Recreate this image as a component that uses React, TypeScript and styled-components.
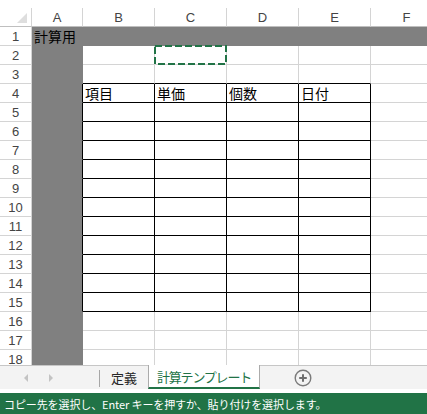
import React, { FC } from 'react'
import styled, { createGlobalStyle } from 'styled-components'

const GRID = '#d4d4d4'
const BAND = '#808080'
const INK = '#000000'
const EXCEL_GREEN = '#217346'

const GlobalStyle = createGlobalStyle`
  html, body {
    margin: 0;
    padding: 0;
    background: #ffffff;
  }
  body {
    width: 427px;
    height: 414px;
    overflow: hidden;
    font-family: "Noto Sans CJK JP", "Noto Sans", sans-serif;
  }
`

const Window = styled.div`
  display: flex;
  flex-direction: column;
  width: 427px;
  height: 414px;
  overflow: hidden;
`

const SheetArea = styled.div`
  height: 365px;
  overflow: hidden;
  padding-top: 8px;
  box-sizing: border-box;
`

const Sheet = styled.div`
  display: grid;
  grid-template-columns: 32px 51px repeat(5, 72px);
  grid-auto-rows: 19px;
`

type CellProps = {
  $fill?: string
  $right?: string
  $bottom?: string
}

const Cell = styled.div<CellProps>`
  box-sizing: border-box;
  background: ${({ $fill }) => $fill || '#ffffff'};
  border-right: 1px solid ${({ $right }) => $right || GRID};
  border-bottom: 1px solid ${({ $bottom }) => $bottom || GRID};
  display: flex;
  align-items: center;
  padding-left: 2px;
  font-size: 14px;
  color: #000;
  white-space: nowrap;
  position: relative;
`

const Overflowing = styled.span`
  position: relative;
  z-index: 2;
  line-height: 1;
`

const Header = styled.div<{ $bottom?: string }>`
  box-sizing: border-box;
  background: #ffffff;
  border-right: 1px solid ${GRID};
  border-bottom: 1px solid ${({ $bottom }) => $bottom || '#bfbfbf'};
  display: flex;
  align-items: center;
  justify-content: center;
  font-family: "Liberation Sans", "DejaVu Sans", sans-serif;
  font-size: 13px;
  color: #444444;
`

const Corner = styled(Header)`
  position: relative;
  border-bottom-color: #bfbfbf;

  &::after {
    content: '';
    position: absolute;
    right: 4px;
    bottom: 3px;
    width: 0;
    height: 0;
    border-left: 10px solid transparent;
    border-bottom: 10px solid #dedede;
  }
`

const Marquee = styled.svg`
  position: absolute;
  left: -1px;
  top: -1px;
  width: 73px;
  height: 20px;
  z-index: 3;
  overflow: visible;
`

const TabBar = styled.div`
  height: 28px;
  background: #ffffff;
  display: flex;
  flex-direction: column;
`

const TabStrip = styled.div`
  height: 24px;
  box-sizing: border-box;
  background: #f3f3f3;
  border-top: 1px solid #c6c6c6;
  display: flex;
  align-items: stretch;
`

const Nav = styled.div`
  width: 99px;
  display: flex;
  align-items: center;
  padding-left: 24px;
  gap: 21px;
  box-sizing: border-box;
`

const Arrow = styled.span<{ $dir: 'left' | 'right' }>`
  width: 0;
  height: 0;
  border-top: 4px solid transparent;
  border-bottom: 4px solid transparent;
  ${({ $dir }) =>
    $dir === 'left' ? 'border-right: 4px solid #c3c3c3;' : 'border-left: 4px solid #c3c3c3;'}
`

const Divider = styled.div`
  width: 1px;
  margin: 4px 0 2px;
  background: #a6a6a6;
`

const Tab = styled.div<{ $active?: boolean }>`
  box-sizing: border-box;
  width: ${({ $active }) => ($active ? '112px' : '48px')};
  display: flex;
  align-items: center;
  justify-content: center;
  font-size: 13px;
  letter-spacing: ${({ $active }) => ($active ? '-1.2px' : '0')};
  color: ${({ $active }) => ($active ? EXCEL_GREEN : '#262626')};
  background: ${({ $active }) => ($active ? '#ffffff' : 'transparent')};
  ${({ $active }) =>
    $active &&
    `
    margin-top: -1px;
    border-left: 1px solid #ababab;
    border-right: 1px solid #ababab;
    border-bottom: 2px solid ${EXCEL_GREEN};
  `}
`

const AddSheet = styled.div`
  width: 86px;
  display: flex;
  align-items: center;
  justify-content: center;
`

const StatusBar = styled.div`
  height: 21px;
  background: ${EXCEL_GREEN};
  color: #ffffff;
  font-size: 11px;
  letter-spacing: -0.1px;
  display: flex;
  align-items: center;
  padding-left: 4px;
  white-space: nowrap;
`

const COLS = ['A', 'B', 'C', 'D', 'E', 'F']
const ROWS = Array.from({ length: 18 }, (_, i) => i + 1)
const TABLE_HEAD = ['項目', '単価', '個数', '日付']

const inTable = (r: number, c: number) => r >= 4 && r <= 15 && c >= 1 && c <= 4

const cellStyle = (r: number, c: number): CellProps => {
  const gray = c === 0 || r === 1
  let right = gray ? BAND : GRID
  let bottom = gray ? BAND : GRID
  if (inTable(r, c)) {
    right = INK
    bottom = INK
  }
  if (c === 0 && r >= 4 && r <= 15) right = INK
  if (r === 3 && c >= 1 && c <= 4) bottom = INK
  return { $fill: gray ? BAND : '#ffffff', $right: right, $bottom: bottom }
}

const PlusIcon: FC = () => (
  <svg width="18" height="18" viewBox="0 0 18 18">
    <circle cx="9" cy="9" r="7.8" fill="none" stroke="#7a7a7a" strokeWidth="1.4" />
    <path d="M9 5.2v7.6M5.2 9h7.6" stroke="#6e6e6e" strokeWidth="2" />
  </svg>
)

const App: FC = () => (
  <Window>
    <GlobalStyle />
    <SheetArea>
      <Sheet>
        <Corner />
        {COLS.map(col => (
          <Header key={col}>{col}</Header>
        ))}
        {ROWS.map(r => (
          <React.Fragment key={r}>
            <Header $bottom={GRID}>{r}</Header>
            {COLS.map((col, c) => {
              const props = cellStyle(r, c)
              let content: React.ReactNode = null
              if (r === 1 && c === 0) content = <Overflowing>計算用</Overflowing>
              if (r === 4 && c >= 1 && c <= 4) content = TABLE_HEAD[c - 1]
              return (
                <Cell key={col} {...props}>
                  {content}
                  {r === 2 && c === 2 && (
                    <Marquee viewBox="0 0 73 20">
                      <rect
                        x="1"
                        y="1"
                        width="71"
                        height="18"
                        fill="none"
                        stroke={EXCEL_GREEN}
                        strokeWidth="2"
                        strokeDasharray="7 3"
                      />
                    </Marquee>
                  )}
                </Cell>
              )
            })}
          </React.Fragment>
        ))}
      </Sheet>
    </SheetArea>
    <TabBar>
      <TabStrip>
        <Nav>
          <Arrow $dir="left" />
          <Arrow $dir="right" />
        </Nav>
        <Divider />
        <Tab>定義</Tab>
        <Tab $active>計算テンプレート</Tab>
        <AddSheet>
          <PlusIcon />
        </AddSheet>
      </TabStrip>
    </TabBar>
    <StatusBar>コピー先を選択し、Enter キーを押すか、貼り付けを選択します。</StatusBar>
  </Window>
)

export default App
